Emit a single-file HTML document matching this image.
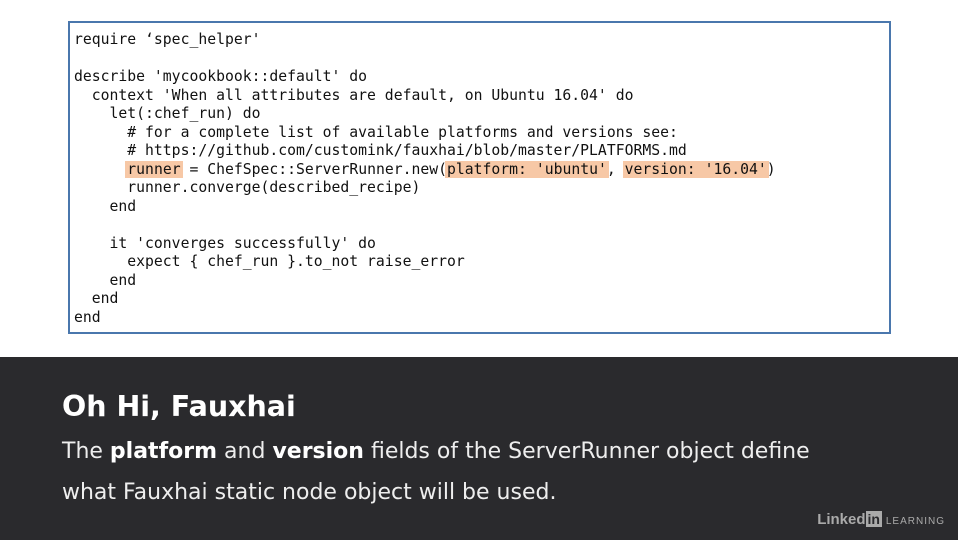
<!DOCTYPE html>
<html><head><style>
body{margin:0;width:960px;height:540px;background:#fff;position:relative;overflow:hidden;font-family:"DejaVu Sans","Liberation Sans",sans-serif}
.box{position:absolute;left:68px;top:21px;width:819px;height:309px;border:2px solid #4a77ad;background:#fff}
pre{position:absolute;left:74px;top:31px;margin:0;font-family:"DejaVu Sans Mono",monospace;font-size:14.75px;line-height:18.5px;color:#111}
.h{background:#f7c8a6;padding:0 2px;margin:0 -2px}
.band{position:absolute;left:0;top:357px;width:958px;height:183px;background:#2a2a2d;color:#f2f2f2}
h1{position:absolute;left:62px;top:390px;margin:0;font-size:28.5px;font-weight:bold;color:#fff}
p{position:absolute;left:62px;top:431px;margin:0;font-size:22px;line-height:41px;color:#eee}
.li{position:absolute;right:15px;top:511px;color:#aaa;font-size:14px;font-family:"Liberation Sans",sans-serif}
</style></head><body>
<div class="box"></div>
<pre>require ‘spec_helper'

describe 'mycookbook::default' do
  context 'When all attributes are default, on Ubuntu 16.04' do
    let(:chef_run) do
      # for a complete list of available platforms and versions see:
      # https://github.com/customink/fauxhai/blob/master/PLATFORMS.md
      <span class="h">runner</span> = ChefSpec::ServerRunner.new(<span class="h">platform: 'ubuntu'</span>, <span class="h">version: '16.04'</span>)
      runner.converge(described_recipe)
    end

    it 'converges successfully' do
      expect { chef_run }.to_not raise_error
    end
  end
end</pre>
<div class="band">
</div>
<h1>Oh Hi, Fauxhai</h1>
<p>The <b style="color:#fff">platform</b> and <b style="color:#fff">version</b> fields of the ServerRunner object define<br>what Fauxhai static node object will be used.</p>
<div class="li"><b style="font-size:15px">Linked</b><span style="background:#aaa;color:#2a2a2d;font-weight:bold;padding:0 2px;font-size:14px">in</span> <span style="font-size:10px;letter-spacing:1px">LEARNING</span></div>
</body></html>
